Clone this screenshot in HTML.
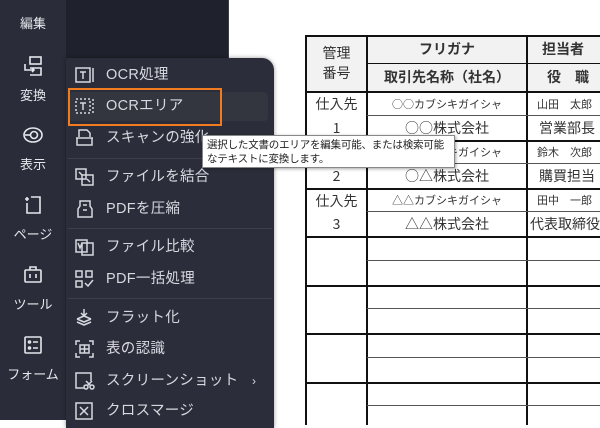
<!DOCTYPE html>
<html><head><meta charset="utf-8"><style>
*{margin:0;padding:0;box-sizing:border-box}
body{width:600px;height:420px;overflow:hidden;position:relative;background:#fff;font-family:"Liberation Sans","Noto Sans CJK JP",sans-serif}
#side{position:absolute;left:0;top:0;width:66px;height:420px;background:#2a2c39}
#mid{position:absolute;left:66px;top:0;width:163px;height:420px;background:#1f212c;border-right:1px solid #3a3c4a}
.lab{position:absolute;left:0;width:66px;text-align:center;color:#e6e7ec;font-size:13px}
.sic{position:absolute;left:22px;width:22px;height:22px}
#menu{position:absolute;left:66px;top:58px;width:208px;height:370px;background:#2b2d3a;border-radius:0 12px 0 0;box-shadow:0 0 4px rgba(0,0,0,.4)}
.it{position:absolute;left:0;width:208px;height:30px;color:#d8d9df;font-size:14.5px;line-height:30px;padding-left:40px;letter-spacing:.3px}
.it svg{position:absolute;left:9px;top:6px}
.sep{position:absolute;left:2px;width:204px;height:1px;background:#3d3f4c}
#hl{position:absolute;left:2px;top:34px;width:200px;height:29px;background:#33353f;border-radius:4px}
#ob{position:absolute;left:68px;top:88px;width:154px;height:38px;border:2px solid #f07c1f}
#tip{position:absolute;left:202px;top:135px;width:253px;height:33px;background:#fff;border:1px solid #888;box-shadow:1px 1px 3px rgba(0,0,0,.35);font-size:10.5px;line-height:14px;padding:2px 4px;color:#222;white-space:nowrap;overflow:hidden;font-family:"Noto Sans CJK JP",sans-serif;letter-spacing:-0.2px}
#tb{position:absolute;left:305px;top:35px}
.h{position:absolute;background:#111}
.c{position:absolute;text-align:center;color:#333;font-family:"Noto Sans CJK JP",sans-serif;white-space:nowrap}
</style></head><body>
<div id="side">
<div class="lab" style="top:13px">編集</div>
<svg class="sic" style="top:55px" viewBox="0 0 22 22" fill="none" stroke="#e6e7ec" stroke-width="1.6"><rect x="8" y="2" width="11" height="7"/><path d="M8 13h11v7H8M3 9v6h9M10 13l2 2-2 2"/></svg>
<div class="lab" style="top:85px">変換</div>
<svg class="sic" style="top:124px" viewBox="0 0 22 22" fill="none" stroke="#e6e7ec" stroke-width="1.6"><ellipse cx="11" cy="11" rx="9" ry="7"/><circle cx="12" cy="11" r="3.5"/><path d="M3 11h5"/></svg>
<div class="lab" style="top:154px">表示</div>
<svg class="sic" style="top:194px" viewBox="0 0 22 22" fill="none" stroke="#e6e7ec" stroke-width="1.6"><path d="M9 3h9v16H5V9M5 7V3M3 5h4"/></svg>
<div class="lab" style="top:224px">ページ</div>
<svg class="sic" style="top:264px" viewBox="0 0 22 22" fill="none" stroke="#e6e7ec" stroke-width="1.6"><rect x="3" y="6" width="16" height="12" rx="1"/><path d="M8 6V3h6v3M8 10v4M14 10v4"/></svg>
<div class="lab" style="top:294px">ツール</div>
<svg class="sic" style="top:334px" viewBox="0 0 22 22" fill="none" stroke="#e6e7ec" stroke-width="1.6"><rect x="3" y="3" width="16" height="16" rx="1"/><circle cx="7.5" cy="8" r="1"/><circle cx="7.5" cy="14" r="1"/><path d="M11 8h5M11 14h5"/></svg>
<div class="lab" style="top:364px">フォーム</div>
</div>
<div id="mid"></div>
<div id="menu">
<div id="hl"></div>
<div class="it" style="top:2px"><svg width="20" height="18" viewBox="0 0 20 18" fill="none" stroke="#d8d9df" stroke-width="1.5"><rect x="1" y="2" width="14" height="14"/><path d="M18 2v14M5 6h6M8 6v7"/></svg>OCR処理</div>
<div class="it" style="top:33px"><svg width="20" height="18" viewBox="0 0 20 18" fill="none" stroke="#d8d9df" stroke-width="1.5" stroke-dasharray="2 2"><rect x="1" y="2" width="14" height="14"/><path d="M18 2v14"/><path d="M5 6h6M8 6v7" stroke-dasharray="none"/></svg>OCRエリア</div>
<div class="it" style="top:65px"><svg width="20" height="18" viewBox="0 0 20 18" fill="none" stroke="#d8d9df" stroke-width="1.5"><path d="M4 8V1h8l3 3v4M1 9h17M2 9v7h15V9"/></svg>スキャンの強化</div>
<div class="sep" style="top:100px"></div>
<div class="it" style="top:104px"><svg width="20" height="18" viewBox="0 0 20 18" fill="none" stroke="#d8d9df" stroke-width="1.5"><rect x="1" y="1" width="10" height="10"/><rect x="7" y="7" width="11" height="10"/><path d="M4 4l3 3M15 14l-3-3"/></svg>ファイルを結合</div>
<div class="it" style="top:136px"><svg width="20" height="18" viewBox="0 0 20 18" fill="none" stroke="#d8d9df" stroke-width="1.5"><path d="M5 1h10v5l2 3v8H3V9l2-3z M8 5h4M8 10h4"/></svg>PDFを圧縮</div>
<div class="sep" style="top:170px"></div>
<div class="it" style="top:174px"><svg width="20" height="18" viewBox="0 0 20 18" fill="none" stroke="#d8d9df" stroke-width="1.5"><rect x="1" y="2" width="11" height="12"/><rect x="7" y="5" width="11" height="12"/><path d="M3 5l2 5 2-5"/></svg>ファイル比較</div>
<div class="it" style="top:206px"><svg width="20" height="18" viewBox="0 0 20 18" fill="none" stroke="#d8d9df" stroke-width="1.5"><rect x="1" y="1" width="6" height="6"/><rect x="11" y="1" width="6" height="6"/><rect x="1" y="11" width="6" height="6"/><path d="M10 13l3 3 5-6"/></svg>PDF一括処理</div>
<div class="sep" style="top:240px"></div>
<div class="it" style="top:245px"><svg width="20" height="18" viewBox="0 0 20 18" fill="none" stroke="#d8d9df" stroke-width="1.5"><path d="M9 0v6M6 4l3 3 3-3M2 10l7 3 7-3M2 13l7 3 7-3M2 10l7-3 7 3"/></svg>フラット化</div>
<div class="it" style="top:276px"><svg width="20" height="18" viewBox="0 0 20 18" fill="none" stroke="#d8d9df" stroke-width="1.5"><path d="M1 5V1h4M14 1h4v4M18 13v4h-4M5 17H1v-4"/><rect x="5" y="5" width="9" height="8"/><path d="M5 9h9M9.5 5v8"/></svg>表の認識</div>
<div class="it" style="top:308px"><svg width="20" height="18" viewBox="0 0 20 18" fill="none" stroke="#d8d9df" stroke-width="1.5"><path d="M9 16H1V1h15v8"/><circle cx="11" cy="15" r="2"/><circle cx="17" cy="15" r="2"/><path d="M11 9l5 5M17 9l-5 5"/></svg>スクリーンショット<span style="position:absolute;left:186px;font-size:12px">›</span></div>
<div class="it" style="top:338px"><svg width="20" height="18" viewBox="0 0 20 18" fill="none" stroke="#d8d9df" stroke-width="1.5"><rect x="1" y="1" width="16" height="16"/><path d="M5 5l8 8M13 5l-8 8"/></svg>クロスマージ</div>
</div>
<div id="ob"></div>

<div id="tb">
<div style="position:absolute;left:1px;top:1px;width:300px;height:56px;background:#f2f2f2"></div>
<div class="h" style="left:0;top:0;width:2px;height:390px"></div>
<div class="h" style="left:61px;top:0;width:2px;height:390px"></div>
<div class="h" style="left:221px;top:0;width:2px;height:390px"></div>
<div class="h" style="left:0;top:0;width:300px;height:2px"></div>
<div class="h" style="left:62px;top:28px;width:240px;height:1px"></div>
<div class="h" style="left:0;top:56px;width:300px;height:2px"></div>
<div class="h" style="left:62px;top:80px;width:240px;height:1px;background:#555"></div>
<div class="h" style="left:0;top:105px;width:300px;height:2px"></div>
<div class="h" style="left:62px;top:128px;width:240px;height:1px;background:#555"></div>
<div class="h" style="left:0;top:153px;width:300px;height:2px"></div>
<div class="h" style="left:62px;top:176px;width:240px;height:1px;background:#555"></div>
<div class="h" style="left:0;top:201px;width:300px;height:2px"></div>
<div class="h" style="left:62px;top:225px;width:240px;height:1px;background:#555"></div>
<div class="h" style="left:0;top:250px;width:300px;height:2px"></div>
<div class="h" style="left:62px;top:273px;width:240px;height:1px;background:#555"></div>
<div class="h" style="left:0;top:298px;width:300px;height:2px"></div>
<div class="h" style="left:62px;top:322px;width:240px;height:1px;background:#555"></div>
<div class="h" style="left:0;top:347px;width:300px;height:2px"></div>
<div class="h" style="left:62px;top:370px;width:240px;height:1px;background:#555"></div>
<div class="c" style="left:2px;top:8px;width:59px;font-size:14px;line-height:20px">管理<br>番号</div>
<div class="c" style="left:63px;top:4px;width:158px;font-size:14px;font-weight:bold">フリガナ</div>
<div class="c" style="left:63px;top:32px;width:158px;font-size:14px;font-weight:bold">取引先名称（社名）</div>
<div class="c" style="left:223px;top:4px;width:90px;font-size:14px;font-weight:bold;text-align:left;padding-left:14px">担当者</div>
<div class="c" style="left:223px;top:32px;width:90px;font-size:14px;font-weight:bold;text-align:left;padding-left:19px">役　職</div>

<div class="c" style="left:2px;top:59px;width:59px;font-size:14px">仕入先</div>
<div class="c" style="left:2px;top:83px;width:59px;font-size:14px">1</div>
<div class="c" style="left:63px;top:61px;width:158px;font-size:11px">○○カブシキガイシャ</div>
<div class="c" style="left:63px;top:83px;width:158px;font-size:14px">○○株式会社</div>
<div class="c" style="left:232px;top:61px;width:80px;font-size:11px;text-align:left">山田　太郎</div>
<div class="c" style="left:232px;top:83px;width:80px;font-size:14px;text-align:left;padding-left:2px">営業部長</div>

<div class="c" style="left:2px;top:131px;width:59px;font-size:14px">2</div>
<div class="c" style="left:63px;top:109px;width:158px;font-size:11px">○△カブシキガイシャ</div>
<div class="c" style="left:63px;top:131px;width:158px;font-size:14px">○△株式会社</div>
<div class="c" style="left:232px;top:109px;width:80px;font-size:11px;text-align:left">鈴木　次郎</div>
<div class="c" style="left:232px;top:131px;width:80px;font-size:14px;text-align:left;padding-left:2px">購買担当</div>

<div class="c" style="left:2px;top:156px;width:59px;font-size:14px">仕入先</div>
<div class="c" style="left:2px;top:179px;width:59px;font-size:14px">3</div>
<div class="c" style="left:63px;top:157px;width:158px;font-size:11px">△△カブシキガイシャ</div>
<div class="c" style="left:63px;top:179px;width:158px;font-size:14px">△△株式会社</div>
<div class="c" style="left:232px;top:157px;width:80px;font-size:11px;text-align:left">田中　一郎</div>
<div class="c" style="left:225px;top:179px;width:90px;font-size:14px;text-align:left">代表取締役</div>
</div>

<div id="tip">選択した文書のエリアを編集可能、または検索可能<br>なテキストに変換します。</div>
</body></html>
